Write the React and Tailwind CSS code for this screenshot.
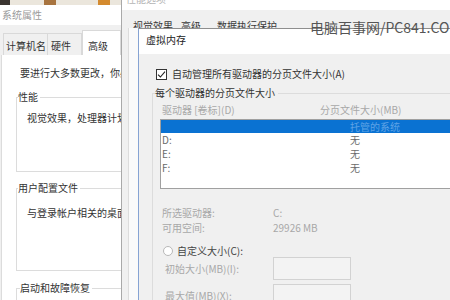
import React from "react";

// drive rows in the page-file list
const DRIVES = [
  { name: "", size: "托管的系统", selected: true },
  { name: "D:", size: "无" },
  { name: "E:", size: "无" },
  { name: "F:", size: "无" },
];

const SystemProps = () => (
  <div className="w-[122px] shrink-0 flex flex-col border-r border-[#a9a9a9] overflow-hidden">
    {/* strip of desktop behind the window */}
    <div className="h-[5px] shrink-0 flex bg-[#ebe6dc]">
      <span className="w-[10px] bg-[#3b3530]" />
      <span className="w-[34px]" />
      <span className="w-[12px] bg-[#a8743f]" />
      <span className="w-[42px]" />
      <span className="w-[12px] bg-[#d48a2e]" />
    </div>
    <div className="h-[20px] shrink-0 bg-white pl-[2px] pt-[4px] leading-[12px] text-[#9a9a9a]">系统属性</div>
    <div className="h-[30px] shrink-0 bg-[#f0f0f0] flex items-end pl-[3px]">
      <div className="h-[22px] w-[45px] border border-b-0 border-[#d9d9d9] pl-[2px] pt-[6px] leading-[12px] text-[#333]">计算机名</div>
      <div className="h-[22px] w-[34px] border border-b-0 border-l-0 border-[#d9d9d9] pl-[3px] pt-[6px] leading-[12px] text-[#333]">硬件</div>
      <div className="h-[25px] flex-1 bg-white border border-b-0 border-[#d9d9d9] pl-[5px] pt-[9px] leading-[12px] text-[#333]">高级</div>
    </div>
    <div className="flex-1 min-h-0 bg-[#f0f0f0] pl-[1px]">
      <div className="h-full bg-white border-l border-[#dcdcdc] text-[#333]">
        <div className="pt-[12px] pl-[18px] leading-[12px] whitespace-nowrap">要进行大多数更改，你必</div>
        <fieldset className="mt-[12px] ml-[14px] w-[124px] h-[81px] border border-[#dcdcdc]">
          <legend className="ml-[1px] pr-[2px] leading-[12px]">性能</legend>
          <div className="mt-[9px] pl-[10px] leading-[12px] whitespace-nowrap">视觉效果，处理器计划</div>
        </fieldset>
        <fieldset className="mt-[10px] ml-[14px] w-[124px] h-[89px] border border-[#dcdcdc]">
          <legend className="ml-[1px] pr-[2px] leading-[12px]">用户配置文件</legend>
          <div className="mt-[13px] pl-[10px] leading-[12px] whitespace-nowrap">与登录帐户相关的桌面</div>
        </fieldset>
        <fieldset className="mt-[11px] ml-[14px] w-[124px] h-[40px] border border-[#dcdcdc]">
          <legend className="ml-[3px] pr-[2px] leading-[12px]">启动和故障恢复</legend>
        </fieldset>
      </div>
    </div>
  </div>
);

const VirtualMemory = () => (
  <div className="relative flex-1 flex flex-col border-l border-t border-l-[#86a3d3] border-t-[#8e8e8e] overflow-hidden">
    <div className="h-[25px] shrink-0 bg-white pl-[7px] pt-[5px] leading-[12px] text-[#222]">虚拟内存</div>
    <div className="flex-1 min-h-0 bg-[#f0f0f0] text-[#333]">
      <div className="mt-[14px] flex items-center h-[12px] pl-[17px]">
        <div className="w-[11px] h-[11px] border border-[#333] bg-white flex items-center justify-center">
          <svg width="9" height="9" viewBox="0 0 9 9">
            <path d="M1 4.6 L3.4 7 L8 1.6" fill="none" stroke="#222" strokeWidth="1.1" />
          </svg>
        </div>
        <span className="ml-[5px] leading-[12px] whitespace-nowrap">自动管理所有驱动器的分页文件大小(A)</span>
      </div>
      <fieldset className="mt-[7px] ml-[13px] w-[340px] h-[240px] border border-[#dcdcdc] border-r-0 border-b-0">
        <legend className="ml-[2px] pr-[3px] leading-[12px] text-[#333]">每个驱动器的分页文件大小</legend>
        <div className="mt-[5px] flex leading-[12px] text-[#a8a8a8] whitespace-nowrap">
          <span className="pl-[9px] w-[167px]">驱动器 [卷标](D)</span>
          <span>分页文件大小(MB)</span>
        </div>
        <div className="mt-[3px] ml-[7px] h-[70px] bg-white border border-[#a0a0a0] border-r-0">
          {DRIVES.map((d, i) => (
            <div
              key={i}
              className={`flex items-center leading-[12px] ${d.selected ? "h-[13px] bg-[#0a72d2] text-[#5fa3e6]" : "h-[14px] text-[#6a6a6a]"}`}
            >
              <span className="pl-[1px] w-[189px]">{d.name}</span>
              <span>{d.size}</span>
            </div>
          ))}
        </div>
        <div className="mt-[18px] flex leading-[12px] text-[#a8a8a8] whitespace-nowrap">
          <span className="pl-[9px] w-[120px]">所选驱动器:</span>
          <span>C:</span>
        </div>
        <div className="mt-[3px] flex leading-[12px] text-[#a8a8a8] whitespace-nowrap">
          <span className="pl-[9px] w-[120px]">可用空间:</span>
          <span>29926 MB</span>
        </div>
        <div className="mt-[11px] flex items-center h-[12px] pl-[10px]">
          <div className="w-[10px] h-[10px] rounded-full border border-[#b8b8b8] bg-white" />
          <span className="ml-[4px] leading-[12px] text-[#444]">自定义大小(C):</span>
        </div>
        <div className="flex items-center h-[23px] text-[#a8a8a8] whitespace-nowrap">
          <span className="pl-[12px] w-[120px] leading-[12px]">初始大小(MB)(I):</span>
          <div className="w-[78px] h-[23px] border border-[#d2d2d2] bg-[#f3f3f3]" />
        </div>
        <div className="mt-[4px] flex items-center h-[23px] text-[#a8a8a8] whitespace-nowrap">
          <span className="pl-[12px] w-[120px] leading-[12px]">最大值(MB)(X):</span>
          <div className="w-[78px] h-[23px] border border-[#d2d2d2] bg-[#f3f3f3]" />
        </div>
      </fieldset>
    </div>
  </div>
);

const PerformanceOptions = () => (
  <div className="flex-1 flex flex-col">
    <div className="h-[10px] shrink-0 bg-white overflow-hidden pl-[4px]">
      <div className="-mt-[7px] leading-[12px] text-[#b5b5b5]">性能选项</div>
    </div>
    <div className="h-[18px] shrink-0 bg-[#f0f0f0] flex text-[#3a3a3a] leading-[12px] whitespace-nowrap">
      <span className="ml-[11px] mt-[10px]">视觉效果</span>
      <span className="ml-[8px] mt-[10px]">高级</span>
      <span className="ml-[16px] mt-[10px]">数据执行保护</span>
    </div>
    <div className="flex-1 min-h-0 flex">
      <div className="w-[16px] flex bg-[#f0f0f0]">
        <div className="w-[6px]" />
        <div className="flex-1 bg-[#fafafa] border-l border-[#dcdcdc]" />
      </div>
      <VirtualMemory />
    </div>
  </div>
);

export default function App() {
  return (
    <div className="relative w-[450px] h-[300px] overflow-hidden flex bg-[#f0f0f0] text-[10px] font-['Noto_Sans_CJK_SC',sans-serif]">
      <SystemProps />
      <PerformanceOptions />
      <div className="absolute left-[310px] top-[18px] text-[14px] leading-[18px] text-[#555] whitespace-nowrap">
        电脑百事网/PC841.CO
      </div>
    </div>
  );
}
